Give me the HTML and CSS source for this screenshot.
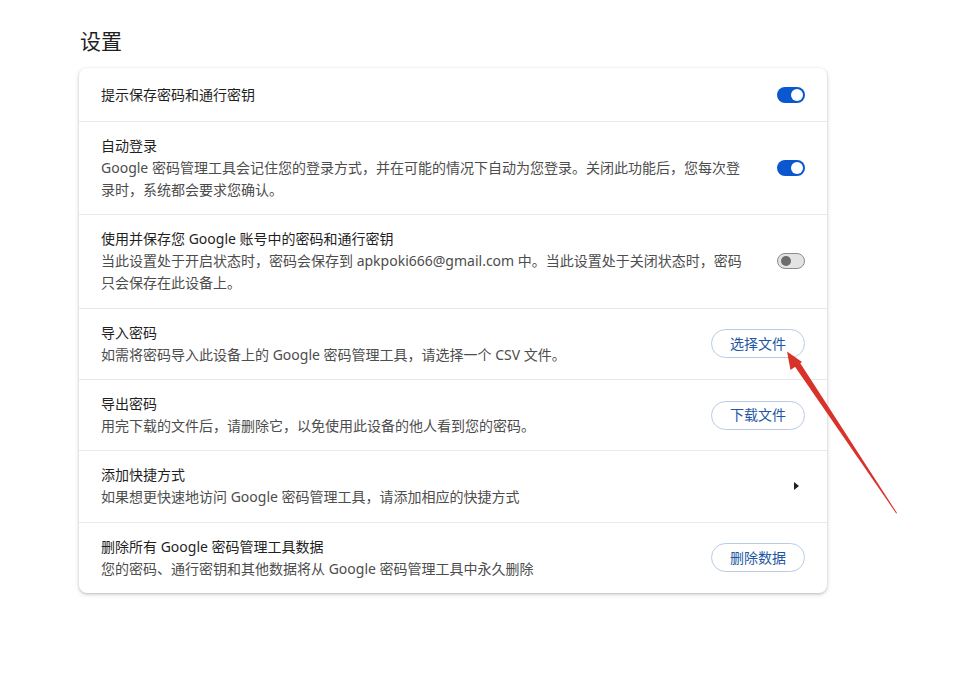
FILE: index.html
```html
<!DOCTYPE html>
<html lang="zh-CN">
<head>
<meta charset="utf-8">
<title>设置</title>
<link rel="stylesheet" href="styles.css">
</head>
<body>
<main class="page">
  <h1 class="page-title">设置</h1>
  <section class="card">
    <div class="row row-first">
      <div class="row-text">
        <div class="row-title">提示保存密码和通行密钥</div>
      </div>
      <span class="toggle toggle-on"><span class="knob"></span></span>
    </div>
    <div class="row">
      <div class="row-text">
        <div class="row-title">自动登录</div>
        <div class="row-sub">Google 密码管理工具会记住您的登录方式，并在可能的情况下自动为您登录。关闭此功能后，您每次登录时，系统都会要求您确认。</div>
      </div>
      <span class="toggle toggle-on"><span class="knob"></span></span>
    </div>
    <div class="row">
      <div class="row-text">
        <div class="row-title">使用并保存您 Google 账号中的密码和通行密钥</div>
        <div class="row-sub">当此设置处于开启状态时，密码会保存到 apkpoki666@gmail.com 中。当此设置处于关闭状态时，密码只会保存在此设备上。</div>
      </div>
      <span class="toggle toggle-off"><span class="knob"></span></span>
    </div>
    <div class="row">
      <div class="row-text">
        <div class="row-title">导入密码</div>
        <div class="row-sub">如需将密码导入此设备上的 Google 密码管理工具，请选择一个 CSV 文件。</div>
      </div>
      <button class="pill-btn">选择文件</button>
    </div>
    <div class="row">
      <div class="row-text">
        <div class="row-title">导出密码</div>
        <div class="row-sub">用完下载的文件后，请删除它，以免使用此设备的他人看到您的密码。</div>
      </div>
      <button class="pill-btn">下载文件</button>
    </div>
    <div class="row">
      <div class="row-text">
        <div class="row-title">添加快捷方式</div>
        <div class="row-sub">如果想更快速地访问 Google 密码管理工具，请添加相应的快捷方式</div>
      </div>
      <span class="chevron"><svg width="20" height="20" viewBox="0 0 20 20"><path d="M9 6 L14 10 L9 14 Z" fill="#1f1f1f"/></svg></span>
    </div>
    <div class="row">
      <div class="row-text">
        <div class="row-title">删除所有 Google 密码管理工具数据</div>
        <div class="row-sub">您的密码、通行密钥和其他数据将从 Google 密码管理工具中永久删除</div>
      </div>
      <button class="pill-btn">删除数据</button>
    </div>
  </section>
</main>
<svg class="annot-arrow" width="957" height="690" viewBox="0 0 957 690">
  <polygon points="793.3,364.2 798.7,360.8 897,513 896.2,513.4" fill="#d8322a"/>
  <polygon points="787,351.5 790.5,370 802,362" fill="#d8322a"/>
</svg>
</body>
</html>
```

FILE: styles.css
```css
html, body {
  margin: 0;
  padding: 0;
  background: #ffffff;
}

body {
  font-family: "Noto Sans", "Noto Sans CJK SC", sans-serif;
  color: #1f1f1f;
  position: relative;
  width: 957px;
  height: 690px;
  overflow: hidden;
}

.page {
  padding: 27px 0 0 79px;
  width: 748px;
}

.page-title {
  margin: 0 0 13px 1px;
  font-size: 21px;
  line-height: 28px;
  font-weight: 400;
  color: #1f1f1f;
}

.card {
  background: #fff;
  border-radius: 8px;
  box-shadow: 0 1px 3px rgba(0, 0, 0, 0.22), 0 2px 6px rgba(0, 0, 0, 0.08);
}

.row {
  display: flex;
  align-items: center;
  padding: 13px 22px 13.35px 22px;
  border-top: 1px solid #e9e9e9;
}

.row-first {
  border-top: none;
  padding-top: 16px;
  padding-bottom: 15px;
}

.row-text {
  flex: 1;
  min-width: 0;
  margin-right: 31px;
}

.row-title {
  font-size: 14px;
  line-height: 22px;
  color: #1f1f1f;
}

.row-sub {
  font-size: 14px;
  line-height: 22px;
  color: #4d4d4d;
}

.toggle {
  position: relative;
  width: 28px;
  height: 16px;
  border-radius: 8px;
  box-sizing: border-box;
  flex: none;
}

.toggle-on {
  background: #0b57d0;
}

.toggle-on .knob {
  position: absolute;
  right: 2px;
  top: 2px;
  width: 12px;
  height: 12px;
  border-radius: 50%;
  background: #fff;
}

.toggle-off {
  background: #e3e3e3;
  border: 1px solid #8a8c8e;
}

.toggle-off .knob {
  position: absolute;
  left: 3px;
  top: 2px;
  width: 10px;
  height: 10px;
  border-radius: 50%;
  background: #6a6c6e;
}

.pill-btn {
  flex: none;
  width: 94px;
  height: 29px;
  box-sizing: border-box;
  border: 1px solid #b9cbe3;
  border-radius: 15px;
  background: #fff;
  color: #1d57a3;
  font-family: "Noto Sans", "Noto Sans CJK SC", sans-serif;
  font-size: 14px;
  line-height: 20px;
  padding: 0;
}

.chevron {
  flex: none;
  width: 20px;
  height: 20px;
  display: block;
}

.chevron svg {
  display: block;
}

.annot-arrow {
  position: absolute;
  left: 0;
  top: 0;
  pointer-events: none;
}
```
